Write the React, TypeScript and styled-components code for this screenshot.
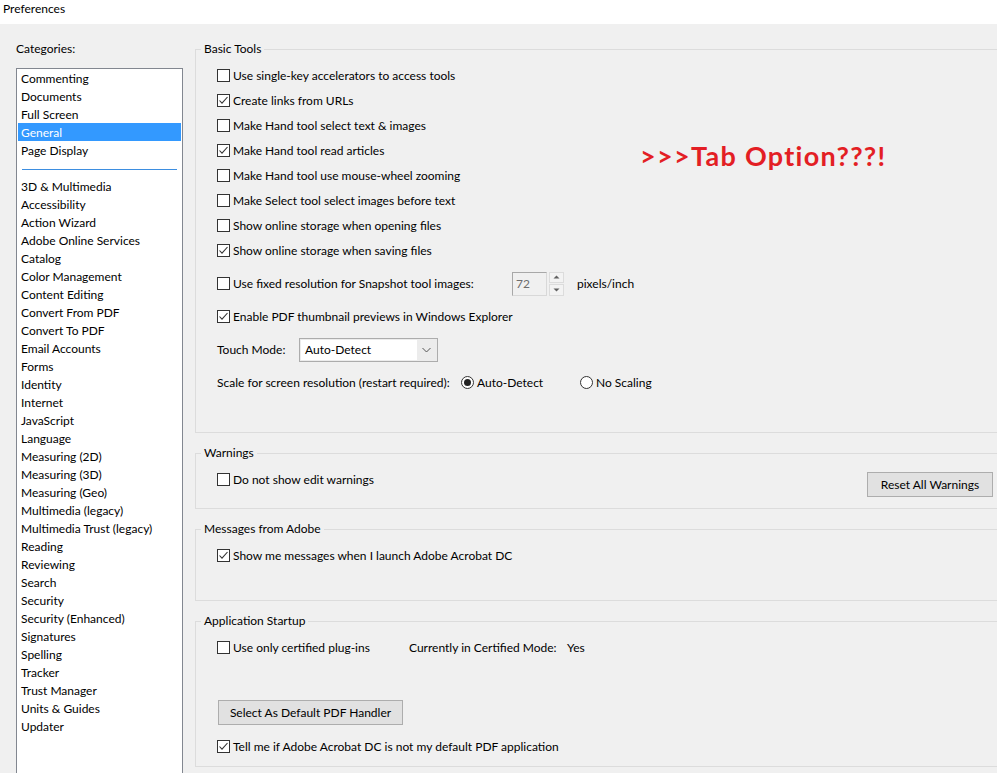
import React from "react";
import styled, { createGlobalStyle } from "styled-components";

const GlobalStyle = createGlobalStyle`
  html, body { margin: 0; padding: 0; background: #f0f0f0; overflow: hidden; }
  body {
    font-family: Lato, "Noto Sans", "Liberation Sans", sans-serif;
    font-size: 12px;
    color: #000;
  }
  * { box-sizing: border-box; }
`;

const Window = styled.div`
  width: 997px;
  height: 773px;
  display: flex;
  flex-direction: column;
  overflow: hidden;
  background: #f0f0f0;
`;

const TitleBar = styled.div`
  height: 24px;
  flex-shrink: 0;
  background: #fff;
  padding: 1px 0 0 3px;
  line-height: 16px;
`;

const Body = styled.div`
  display: flex;
  gap: 12px;
  flex: 1;
  min-height: 0;
`;

const Sidebar = styled.div`
  width: 183px;
  flex-shrink: 0;
  padding-left: 16px;
  display: flex;
  flex-direction: column;
`;

const SideLabel = styled.div`
  margin-top: 17px;
  height: 16px;
  line-height: 16px;
`;

const CategoryList = styled.ul`
  margin: 11px 0 0;
  padding: 0 1px;
  list-style: none;
  background: #fff;
  border: 1px solid #828790;
  border-bottom: none;
  height: 740px;
  flex-shrink: 0;
`;

const CategoryItem = styled.li<{ $selected?: boolean }>`
  height: 18px;
  padding: 2px 0 0 3px;
  line-height: 16px;
  white-space: nowrap;
  background: ${(p) => (p.$selected ? "#3399ff" : "transparent")};
  color: ${(p) => (p.$selected ? "#fff" : "#000")};
`;

const SeparatorItem = styled.li`
  height: 18px;
  padding: 10px 4px 0;
`;

const SeparatorLine = styled.div`
  height: 1px;
  background: #3d8ee0;
`;

const Panels = styled.div`
  width: 806px;
  flex-shrink: 0;
  display: flex;
  flex-direction: column;
`;

const GroupBox = styled.fieldset<{ $mt: number }>`
  position: relative;
  margin: ${(p) => p.$mt}px 0 0;
  padding: 0;
  min-width: 0;
  border: 1px solid #dcdcdc;
`;

const Legend = styled.legend`
  margin-left: 5px;
  padding: 0 3px;
  height: 16px;
  line-height: 16px;
`;

const GroupContent = styled.div<{ $pt: number; $pb: number }>`
  padding: ${(p) => p.$pt}px 7px ${(p) => p.$pb}px 21px;
  display: flex;
  flex-direction: column;
`;

const Row = styled.div<{ $h?: number; $mt?: number }>`
  display: flex;
  align-items: center;
  height: ${(p) => p.$h ?? 25}px;
  margin-top: ${(p) => p.$mt ?? 0}px;
  white-space: nowrap;
`;

const SplitRow = styled.div`
  display: flex;
  align-items: flex-start;
  justify-content: space-between;
`;

const CheckLabel = styled.label<{ $w?: number }>`
  display: flex;
  align-items: center;
  gap: 3px;
  height: 25px;
  white-space: nowrap;
  width: ${(p) => (p.$w ? `${p.$w}px` : "auto")};
  flex-shrink: 0;
`;

const Box = styled.span`
  width: 13px;
  height: 13px;
  border: 1px solid #333;
  background: #fff;
  display: inline-flex;
  align-items: center;
  justify-content: center;
  flex-shrink: 0;
`;

const RadioLabel = styled.label<{ $w?: number }>`
  display: flex;
  align-items: center;
  gap: 3px;
  width: ${(p) => (p.$w ? `${p.$w}px` : "auto")};
  flex-shrink: 0;
`;

const RadioCircle = styled.span`
  width: 13px;
  height: 13px;
  border: 1px solid #333;
  border-radius: 50%;
  background: #fff;
  display: inline-flex;
  align-items: center;
  justify-content: center;
  flex-shrink: 0;
`;

const RadioDot = styled.span`
  width: 7px;
  height: 7px;
  border-radius: 50%;
  background: #222;
`;

const FieldLabel = styled.span<{ $w: number }>`
  width: ${(p) => p.$w}px;
  flex-shrink: 0;
`;

const SpinInput = styled.div`
  width: 35px;
  height: 24px;
  border: 1px solid #a8a8a8;
  border-right-color: #d8d8d8;
  border-bottom-color: #d8d8d8;
  background: #f0f0f0;
  color: #6d6d6d;
  padding-left: 3px;
  line-height: 21px;
  font-size: 12px;
`;

const SpinButtons = styled.div`
  margin-left: 2px;
  width: 15px;
  height: 24px;
  display: flex;
  flex-direction: column;
  gap: 1px;
`;

const SpinButton = styled.div`
  flex: 1;
  background: #f3f3f3;
  border: 1px solid #dcdcdc;
  display: flex;
  align-items: center;
  justify-content: center;
`;

const Unit = styled.span`
  margin-left: 13px;
`;

const Dropdown = styled.div`
  width: 139px;
  height: 24px;
  border: 1px solid #acacac;
  background: #ececec;
  padding: 1px;
  display: flex;
`;

const DropValue = styled.div`
  flex: 1;
  background: #fff;
  padding-left: 4px;
  line-height: 20px;
`;

const DropArrow = styled.div`
  width: 19px;
  display: flex;
  align-items: center;
  justify-content: center;
`;

const PushButton = styled.button<{ $w: number; $mt?: number; $ml?: number }>`
  width: ${(p) => p.$w}px;
  height: 25px;
  margin: ${(p) => p.$mt ?? 0}px 0 0 ${(p) => p.$ml ?? 0}px;
  padding: 0;
  background: #e1e1e1;
  border: 1px solid #adadad;
  font-family: inherit;
  font-size: 12px;
  color: #000;
  flex-shrink: 0;
`;

const InfoText = styled.span<{ $w?: number }>`
  width: ${(p) => (p.$w ? `${p.$w}px` : "auto")};
  flex-shrink: 0;
`;

const Annotation = styled.div`
  position: absolute;
  left: 444px;
  top: 84px;
  font-family: "Comic Sans MS", Lato, "DejaVu Sans", sans-serif;
  font-weight: 700;
  font-size: 27px;
  line-height: 30px;
  color: #e31e24;
  letter-spacing: 1.3px;
  white-space: nowrap;
`;

const CheckMark = () => (
  <svg width="11" height="11" viewBox="0 0 11 11">
    <polyline points="1.5,5.5 4,8.2 9.5,2" fill="none" stroke="#333" strokeWidth="1.1" />
  </svg>
);

const Checkbox: React.FC<{ checked?: boolean; label: string; w?: number }> = ({ checked, label, w }) => (
  <CheckLabel $w={w}>
    <Box>{checked && <CheckMark />}</Box>
    <span>{label}</span>
  </CheckLabel>
);

const Radio: React.FC<{ checked?: boolean; label: string; w?: number }> = ({ checked, label, w }) => (
  <RadioLabel $w={w}>
    <RadioCircle>{checked && <RadioDot />}</RadioCircle>
    <span>{label}</span>
  </RadioLabel>
);

const TriUp = () => (
  <svg width="7" height="4" viewBox="0 0 7 4">
    <polygon points="0.5,3.5 3.5,0.5 6.5,3.5" fill="#606060" />
  </svg>
);
const TriDown = () => (
  <svg width="7" height="4" viewBox="0 0 7 4">
    <polygon points="0.5,0.5 6.5,0.5 3.5,3.5" fill="#606060" />
  </svg>
);
const Chevron = () => (
  <svg width="9" height="6" viewBox="0 0 9 6">
    <polyline points="0.5,1 4.5,5 8.5,1" fill="none" stroke="#555" strokeWidth="1" />
  </svg>
);

const topCategories = ["Commenting", "Documents", "Full Screen", "General", "Page Display"];
const otherCategories = [
  "3D & Multimedia",
  "Accessibility",
  "Action Wizard",
  "Adobe Online Services",
  "Catalog",
  "Color Management",
  "Content Editing",
  "Convert From PDF",
  "Convert To PDF",
  "Email Accounts",
  "Forms",
  "Identity",
  "Internet",
  "JavaScript",
  "Language",
  "Measuring (2D)",
  "Measuring (3D)",
  "Measuring (Geo)",
  "Multimedia (legacy)",
  "Multimedia Trust (legacy)",
  "Reading",
  "Reviewing",
  "Search",
  "Security",
  "Security (Enhanced)",
  "Signatures",
  "Spelling",
  "Tracker",
  "Trust Manager",
  "Units & Guides",
  "Updater",
];

const basicChecks: [string, boolean][] = [
  ["Use single-key accelerators to access tools", false],
  ["Create links from URLs", true],
  ["Make Hand tool select text & images", false],
  ["Make Hand tool read articles", true],
  ["Make Hand tool use mouse-wheel zooming", false],
  ["Make Select tool select images before text", false],
  ["Show online storage when opening files", false],
  ["Show online storage when saving files", true],
];

export default function App() {
  return (
    <Window>
      <GlobalStyle />
      <TitleBar>Preferences</TitleBar>
      <Body>
        <Sidebar>
          <SideLabel>Categories:</SideLabel>
          <CategoryList>
            {topCategories.map((c) => (
              <CategoryItem key={c} $selected={c === "General"}>
                {c}
              </CategoryItem>
            ))}
            <SeparatorItem>
              <SeparatorLine />
            </SeparatorItem>
            {otherCategories.map((c) => (
              <CategoryItem key={c}>{c}</CategoryItem>
            ))}
          </CategoryList>
        </Sidebar>
        <Panels>
          <GroupBox $mt={17}>
            <Legend>Basic Tools</Legend>
            <Annotation>&gt;&gt;&gt;Tab Option???!</Annotation>
            <GroupContent $pt={6} $pb={33}>
              {basicChecks.map(([label, checked]) => (
                <Checkbox key={label} label={label} checked={checked} />
              ))}
              <Row $h={33} $mt={4}>
                <Checkbox label="Use fixed resolution for Snapshot tool images:" w={295} />
                <SpinInput>72</SpinInput>
                <SpinButtons>
                  <SpinButton>
                    <TriUp />
                  </SpinButton>
                  <SpinButton>
                    <TriDown />
                  </SpinButton>
                </SpinButtons>
                <Unit>pixels/inch</Unit>
              </Row>
              <Row $h={33}>
                <Checkbox label="Enable PDF thumbnail previews in Windows Explorer" checked />
              </Row>
              <Row $h={33}>
                <FieldLabel $w={82}>Touch Mode:</FieldLabel>
                <Dropdown>
                  <DropValue>Auto-Detect</DropValue>
                  <DropArrow>
                    <Chevron />
                  </DropArrow>
                </Dropdown>
              </Row>
              <Row $h={33}>
                <FieldLabel $w={244}>Scale for screen resolution (restart required):</FieldLabel>
                <Radio label="Auto-Detect" checked w={119} />
                <Radio label="No Scaling" />
              </Row>
            </GroupContent>
          </GroupBox>

          <GroupBox $mt={12}>
            <Legend>Warnings</Legend>
            <GroupContent $pt={6} $pb={11}>
              <SplitRow>
                <Checkbox label="Do not show edit warnings" />
                <PushButton $w={126} $mt={5}>
                  Reset All Warnings
                </PushButton>
              </SplitRow>
            </GroupContent>
          </GroupBox>

          <GroupBox $mt={12}>
            <Legend>Messages from Adobe</Legend>
            <GroupContent $pt={6} $pb={32}>
              <Checkbox label="Show me messages when I launch Adobe Acrobat DC" checked />
            </GroupContent>
          </GroupBox>

          <GroupBox $mt={12}>
            <Legend>Application Startup</Legend>
            <GroupContent $pt={6} $pb={7}>
              <Row>
                <Checkbox label="Use only certified plug-ins" w={192} />
                <InfoText $w={158}>Currently in Certified Mode:</InfoText>
                <InfoText>Yes</InfoText>
              </Row>
              <Row $h={25} $mt={40}>
                <PushButton $w={185} $ml={1}>
                  Select As Default PDF Handler
                </PushButton>
              </Row>
              <Row $mt={9}>
                <Checkbox label="Tell me if Adobe Acrobat DC is not my default PDF application" checked />
              </Row>
            </GroupContent>
          </GroupBox>
        </Panels>
      </Body>
    </Window>
  );
}
